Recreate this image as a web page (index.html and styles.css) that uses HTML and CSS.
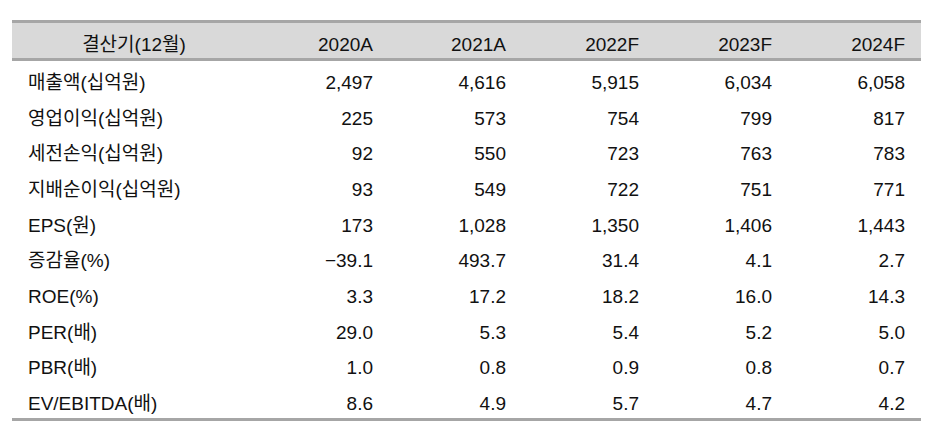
FILE: index.html
```html
<!DOCTYPE html>
<html lang="ko">
<head>
<meta charset="utf-8">
<link rel="stylesheet" href="styles.css">
</head>
<body>
<table class="fin">
  <thead>
    <tr><th class="lbl">결산기(12월)</th><th>2020A</th><th>2021A</th><th>2022F</th><th>2023F</th><th>2024F</th></tr>
  </thead>
  <tbody>
    <tr><td class="lbl">매출액(십억원)</td><td>2,497</td><td>4,616</td><td>5,915</td><td>6,034</td><td>6,058</td></tr>
    <tr><td class="lbl">영업이익(십억원)</td><td>225</td><td>573</td><td>754</td><td>799</td><td>817</td></tr>
    <tr><td class="lbl">세전손익(십억원)</td><td>92</td><td>550</td><td>723</td><td>763</td><td>783</td></tr>
    <tr><td class="lbl">지배순이익(십억원)</td><td>93</td><td>549</td><td>722</td><td>751</td><td>771</td></tr>
    <tr><td class="lbl">EPS(원)</td><td>173</td><td>1,028</td><td>1,350</td><td>1,406</td><td>1,443</td></tr>
    <tr><td class="lbl">증감율(%)</td><td>−39.1</td><td>493.7</td><td>31.4</td><td>4.1</td><td>2.7</td></tr>
    <tr><td class="lbl">ROE(%)</td><td>3.3</td><td>17.2</td><td>18.2</td><td>16.0</td><td>14.3</td></tr>
    <tr><td class="lbl">PER(배)</td><td>29.0</td><td>5.3</td><td>5.4</td><td>5.2</td><td>5.0</td></tr>
    <tr><td class="lbl">PBR(배)</td><td>1.0</td><td>0.8</td><td>0.9</td><td>0.8</td><td>0.7</td></tr>
    <tr><td class="lbl">EV/EBITDA(배)</td><td>8.6</td><td>4.9</td><td>5.7</td><td>4.7</td><td>4.2</td></tr>
  </tbody>
</table>
</body>
</html>
```
FILE: styles.css
```css
html, body {
  margin: 0;
  padding: 0;
  background: #fff;
}
body {
  padding: 20px 13px 0 12px;
  font-family: "Liberation Sans", "Noto Sans CJK KR", sans-serif;
  font-size: 19px;
  color: #111;
}
.fin {
  width: 909px;
  border-collapse: collapse;
  table-layout: fixed;
}
.fin th, .fin td {
  padding: 8px 16px 0 0;
  text-align: right;
  font-weight: normal;
  white-space: nowrap;
  line-height: 22px;
}
.fin th {
  background: #d9d9d9;
  height: 27px;
  border-top: 3px solid #a6a6a6;
  border-bottom: 3px solid #a6a6a6;
}
.fin td {
  height: 27.7px;
}
.fin tbody tr:last-child td {
  border-bottom: 3px solid #a6a6a6;
}
.fin th.lbl {
  width: 244px;
  text-align: center;
  padding: 8px 0 0 0;
}
.fin td.lbl {
  text-align: left;
  padding: 8px 0 0 16px;
}
```
